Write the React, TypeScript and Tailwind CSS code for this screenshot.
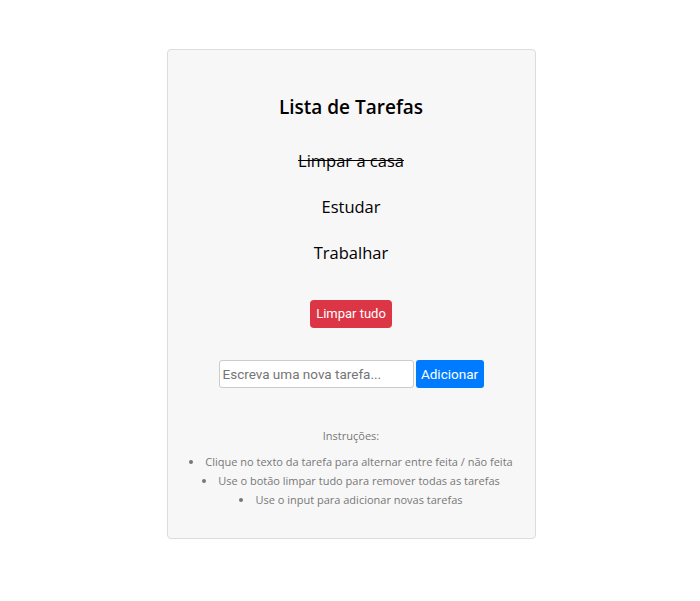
export default function App() {
  const tasks = [
    { text: "Limpar a casa", done: true },
    { text: "Estudar", done: false },
    { text: "Trabalhar", done: false },
  ];
  return (
    <div className="w-[700px] h-[601px] bg-white pt-[49px] pl-[2px] flex justify-center" style={{ fontFamily: '"Open Sans", sans-serif' }}>
      <div className="w-[369px] h-[490px] bg-[#f7f7f7] border border-[#dcdcdc] rounded-[4px] flex flex-col items-center pt-[43px]">
        <h1 className="text-[19px] leading-[28px] font-semibold text-black">Lista de Tarefas</h1>
        <div className="mt-[27px] flex flex-col items-center gap-[20px]">
          {tasks.map((t) => (
            <div key={t.text} className={`text-[16.5px] leading-[26px] text-black ${t.done ? "line-through" : ""}`}>
              {t.text}
            </div>
          ))}
        </div>
        <button
          className="mt-[34px] h-[28px] w-[82px] bg-[#dc3545] text-white text-[13px] rounded-[4px]"
          style={{ fontFamily: "Roboto, sans-serif" }}
        >
          Limpar tudo
        </button>
        <div className="mt-[32px] flex gap-[2px]" style={{ fontFamily: "Roboto, sans-serif" }}>
          <input
            className="w-[195px] h-[28px] border border-[#cccccc] rounded-[3px] bg-white px-[3px] text-[13.5px] placeholder:text-[#757575]"
            placeholder="Escreva uma nova tarefa..."
          />
          <button className="w-[68px] h-[28px] bg-[#007bff] text-white text-[13.5px] rounded-[3px]">Adicionar</button>
        </div>
        <div className="mt-[40px] text-[11px] leading-[16px] text-[#777777]">Instruções:</div>
        <ul className="mt-[8px] list-disc list-inside text-[11px] leading-[19px] text-[#777777] text-center">
          <li>Clique no texto da tarefa para alternar entre feita / não feita</li>
          <li>Use o botão limpar tudo para remover todas as tarefas</li>
          <li>Use o input para adicionar novas tarefas</li>
        </ul>
      </div>
    </div>
  );
}
